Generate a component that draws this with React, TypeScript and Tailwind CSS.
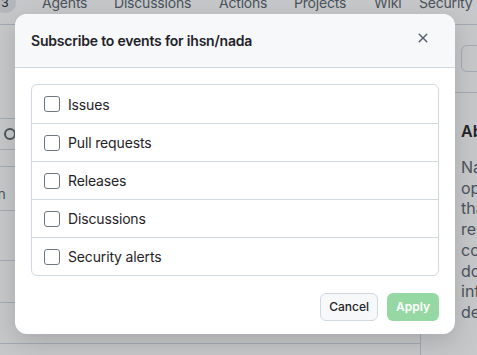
import React from "react";

const events = ["Issues", "Pull requests", "Releases", "Discussions", "Security alerts"];
const tabs = [
  { label: "Agents", w: "w-[44px]" },
  { label: "Discussions", w: "w-[77px]" },
  { label: "Actions", w: "w-[47px]" },
  { label: "Projects", w: "w-[52px]" },
  { label: "Wiki", w: "w-[27px]" },
];
const about = ["Nada is", "open source", "that enables", "research", "complete", "documentation", "information", "describe"];

const App = () => {
  return (
    <main className="relative w-[477px] h-[355px] overflow-hidden bg-white text-[#1f2328] font-['Inter',sans-serif]">
      {/* page behind the dialog */}
      <div className="h-[25px] border-b border-[#d1d9e0] overflow-hidden">
        <div className="flex items-center -mt-[8px]">
          <span className="ml-[-6px] w-[22px] h-[20px] shrink-0 rounded-full bg-[#e6eaef] text-[12px] flex items-center justify-center">
            3
          </span>
          <div className="flex gap-[28px] ml-[26px] text-[14px] text-[#59636e] whitespace-nowrap tracking-[-0.2px]">
            {tabs.map((t) => (
              <span key={t.label} className={`${t.w} shrink-0`}>
                {t.label}
              </span>
            ))}
          </div>
          <span className="ml-[18px] text-[14px] text-[#59636e] whitespace-nowrap tracking-[-0.2px]">
            Security
          </span>
        </div>
      </div>
      <div className="flex">
        <div className="w-[421px] shrink-0 border-r border-[#d1d9e0] h-[330px]">
          <div className="mt-[93px] ml-[-20px] w-[60px] h-[32px] border border-[#d1d9e0] rounded-md flex items-center pl-[23px]">
            <span className="w-[12px] h-[12px] rounded-full border-2 border-[#59636e]" />
          </div>
          <div className="mt-[16px] border-t border-[#d1d9e0] h-[44px] flex items-center pt-[10px] text-[14px] text-[#59636e]">
            <span className="ml-[-6px]">in</span>
          </div>
          <div className="border-t border-[#d1d9e0] h-[50px]" />
          <div className="border-t border-[#d1d9e0] h-[42px]" />
          <div className="border-t border-[#d1d9e0] h-[41px]" />
          <div className="border-t border-[#d1d9e0]" />
        </div>
        <div className="flex-1 min-w-0 pl-[40px]">
          <div className="mt-[20px] w-[40px] h-[27px] border border-[#d1d9e0] rounded-md" />
          <div className="mt-[20px] -ml-[40px] border-t border-[#d1d9e0]" />
          <h2 className="mt-[26px] text-[16px] font-semibold whitespace-nowrap">About</h2>
          <div className="mt-[14px] text-[16px] leading-[20.7px] text-[#59636e] whitespace-nowrap">
            {about.map((l) => (
              <div key={l}>{l}</div>
            ))}
          </div>
        </div>
      </div>

      {/* backdrop */}
      <div className="absolute inset-0 bg-[#1f2328]/25" />

      {/* dialog */}
      <div className="absolute left-[15px] top-[14px] w-[440px] h-[320px] bg-white rounded-xl shadow-[0_8px_24px_rgba(66,74,83,0.25)] overflow-hidden flex flex-col">
        <div className="h-[54px] shrink-0 bg-[#f6f8fa] border-b border-[#d1d9e0] flex items-center justify-between px-[16px]">
          <h1 className="text-[14px] font-semibold leading-[20px] mt-[1px] tracking-[-0.2px]">
            Subscribe to events for ihsn/nada
          </h1>
          <button className="w-[32px] h-[32px] flex items-center justify-center text-[#59636e] -mt-[6px]">
            <svg width="16" height="16" viewBox="0 0 16 16" fill="currentColor">
              <path d="M3.72 3.72a.75.75 0 0 1 1.06 0L8 6.94l3.22-3.22a.749.749 0 0 1 1.275.326.749.749 0 0 1-.215.734L9.06 8l3.22 3.22a.749.749 0 0 1-.326 1.275.749.749 0 0 1-.734-.215L8 9.06l-3.22 3.22a.751.751 0 0 1-1.042-.018.751.751 0 0 1-.018-1.042L6.94 8 3.72 4.78a.75.75 0 0 1 0-1.06Z" />
            </svg>
          </button>
        </div>
        <div className="px-[16px] pt-[16px]">
          <ul className="border border-[#d1d9e0] rounded-md">
            {events.map((e, i) => (
              <li
                key={e}
                className={`h-[38px] flex items-center gap-[8px] pl-[12px] text-[14px] tracking-[-0.15px] ${
                  i > 0 ? "border-t border-[#d1d9e0]" : ""
                }`}
              >
                <span className="w-[16px] h-[16px] rounded-[3px] border border-[#6e7781] bg-white" />
                <span>{e}</span>
              </li>
            ))}
          </ul>
          <div className="flex justify-end gap-[9px] mt-[17px]">
            <button className="h-[28px] px-[8px] rounded-md border border-[#d1d9e0] bg-[#f6f8fa] text-[12px] font-medium text-[#1f2328]">
              Cancel
            </button>
            <button className="h-[28px] px-[9px] rounded-md bg-[#95d8a4] text-[12px] font-semibold text-white">
              Apply
            </button>
          </div>
        </div>
      </div>
    </main>
  );
};

export default App;
